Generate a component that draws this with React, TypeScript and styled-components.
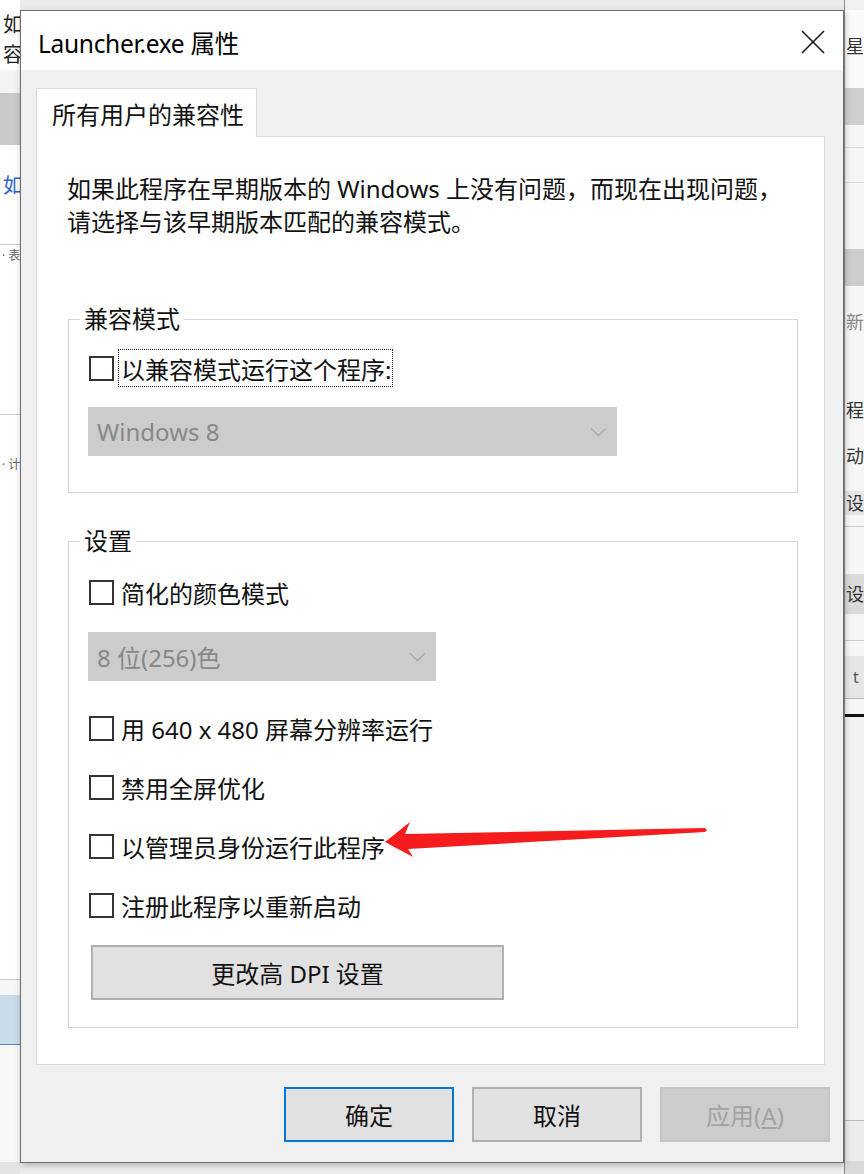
import React from "react";
import styled, { createGlobalStyle } from "styled-components";

const GlobalStyle = createGlobalStyle`
  html, body { margin: 0; padding: 0; background: #ececec; }
  body {
    font-family: "Noto Sans", "Noto Sans CJK SC", sans-serif;
    color: #111;
  }
  * { box-sizing: border-box; }
`;

/* ---------- desktop / window behind ---------- */

const Desktop = styled.main`
  position: relative;
  width: 864px;
  height: 1174px;
  overflow: hidden;
  background: #ececec;
  display: flex;
  justify-content: space-between;
`;

const SideStrip = styled.aside<{ $w: number; $edge?: string }>`
  width: ${(p) => p.$w}px;
  height: 100%;
  display: flex;
  flex-direction: column;
  ${(p) => (p.$edge ? `border-left: 1px solid ${p.$edge};` : "")}
`;

const StripRow = styled.div<{
  $h?: number;
  $bg?: string;
  $color?: string;
  $size?: number;
  $indent?: number;
  $line?: string;
  $grow?: boolean;
}>`
  flex: ${(p) => (p.$grow ? "1 1 auto" : "0 0 auto")};
  height: ${(p) => (p.$h ? `${p.$h}px` : "auto")};
  background: ${(p) => p.$bg || "#fff"};
  color: ${(p) => p.$color || "#222"};
  font-size: ${(p) => p.$size || 20}px;
  line-height: 1;
  padding-left: ${(p) => p.$indent ?? 3}px;
  display: flex;
  align-items: center;
  white-space: nowrap;
  ${(p) => (p.$line ? `border-bottom: 1px solid ${p.$line};` : "")}
`;

type Row = {
  h?: number;
  bg?: string;
  ch?: string;
  color?: string;
  size?: number;
  indent?: number;
  line?: string;
  grow?: boolean;
};

const leftRows: Row[] = [
  { h: 10, bg: "#ffffff" },
  { h: 30, bg: "#ffffff", ch: "如", size: 20 },
  { h: 30, bg: "#ffffff", ch: "容", size: 20 },
  { h: 23, bg: "#f3f3f3" },
  { h: 52, bg: "#c9c9c9" },
  { h: 26, bg: "#ffffff" },
  { h: 30, bg: "#ffffff", ch: "如", color: "#2a62c9", size: 20 },
  { h: 44, bg: "#ffffff", line: "#cfcfcf" },
  { h: 22, bg: "#ffffff", ch: "·  表", color: "#666", size: 12, indent: 2 },
  { h: 148, bg: "#ffffff", line: "#cfcfcf" },
  { h: 100, bg: "#ffffff", ch: "·  计", color: "#666", size: 12, indent: 2 },
  { h: 465, bg: "#ffffff", line: "#cfcfcf" },
  { h: 15, bg: "#f6f6f6" },
  { h: 50, bg: "#c9dcec", line: "#5b86b5" },
  { h: 117, bg: "#f7f7f7" },
  { grow: true, bg: "#e4e4e4" },
];

const rightRows: Row[] = [
  { h: 10, bg: "#f0f0f0" },
  { h: 22, bg: "#fafafa" },
  { h: 28, bg: "#fafafa", ch: "星", color: "#333", size: 18, indent: 1 },
  { h: 28, bg: "#fafafa" },
  { h: 37, bg: "#cfcfcf" },
  { h: 23, bg: "#f6f6f6", line: "#dddddd" },
  { h: 35, bg: "#f6f6f6", line: "#dddddd" },
  { h: 66, bg: "#f6f6f6" },
  { h: 37, bg: "#cdcdcd" },
  { h: 25, bg: "#f6f6f6" },
  { h: 22, bg: "#f6f6f6", ch: "新", color: "#888", size: 18, indent: 1 },
  { h: 66, bg: "#f6f6f6" },
  { h: 22, bg: "#f6f6f6", ch: "程", color: "#333", size: 18, indent: 1 },
  { h: 24, bg: "#f6f6f6" },
  { h: 22, bg: "#f6f6f6", ch: "动", color: "#333", size: 18, indent: 1 },
  { h: 24, bg: "#f6f6f6" },
  { h: 24, bg: "#e6e6e6", ch: "设", color: "#333", size: 18, indent: 1 },
  { h: 12, bg: "#f6f6f6", line: "#cccccc" },
  { h: 47, bg: "#f6f6f6" },
  { h: 40, bg: "#dadada", ch: "设", color: "#333", size: 18, indent: 1 },
  { h: 27, bg: "#f6f6f6", line: "#cccccc" },
  { h: 15, bg: "#f6f6f6" },
  { h: 43, bg: "#e6e6e6", ch: "t", color: "#555", size: 16, indent: 8, line: "#bbbbbb" },
  { h: 15, bg: "#f6f6f6" },
  { h: 3, bg: "#111111" },
  { h: 404, bg: "#f2f2f2", line: "#bbbbbb" },
  { h: 40, bg: "#ececec" },
  { grow: true, bg: "#d9d9d9" },
];

const renderRows = (rows: Row[]) =>
  rows.map((r, i) => (
    <StripRow
      key={i}
      $h={r.h}
      $bg={r.bg}
      $color={r.color}
      $size={r.size}
      $indent={r.indent}
      $line={r.line}
      $grow={r.grow}
    >
      {r.ch}
    </StripRow>
  ));

/* ---------- dialog ---------- */

const Dialog = styled.section`
  position: absolute;
  z-index: 2;
  left: 20px;
  top: 10px;
  width: 824px;
  height: 1153px;
  border: 1px solid #6e6e6e;
  background: #f0f0f0;
  box-shadow: 1px 2px 6px rgba(0, 0, 0, 0.25);
  display: flex;
  flex-direction: column;
`;

const TitleBar = styled.header`
  height: 59px;
  flex: 0 0 auto;
  background: #ffffff;
  display: flex;
  align-items: center;
  justify-content: space-between;
  padding: 3px 16px 0 17px;
`;

const Title = styled.h1`
  margin: 0;
  font-size: 24.5px;
  font-weight: 400;
  color: #000;
  letter-spacing: -0.3px;
`;

const CloseButton = styled.button`
  width: 28px;
  height: 28px;
  border: none;
  background: transparent;
  padding: 0;
  display: flex;
  align-items: center;
  justify-content: center;
`;

const Body = styled.div`
  flex: 1 1 auto;
  display: flex;
  flex-direction: column;
  padding: 18px 18px 0 15px;
`;

const TabStrip = styled.nav`
  display: flex;
`;

const Tab = styled.div`
  position: relative;
  z-index: 1;
  width: 221px;
  height: 49px;
  margin-bottom: -1px;
  padding-left: 15px;
  background: #ffffff;
  border: 1px solid #d9d9d9;
  border-bottom: none;
  display: flex;
  align-items: center;
  font-size: 24px;
  color: #111;
`;

const Panel = styled.div`
  background: #ffffff;
  border: 1px solid #d9d9d9;
  padding: 35px 26px 36px 30px;
  display: flex;
  flex-direction: column;
`;

const Intro = styled.p`
  margin: 0;
  font-size: 24px;
  line-height: 33px;
  color: #111;
`;

const Group = styled.fieldset<{ $mt: number }>`
  margin: ${(p) => p.$mt}px 0 0 1px;
  padding: 0;
  min-width: 0;
  border: 1px solid #d6d6d6;
`;

const Legend = styled.legend`
  margin-left: 11px;
  padding: 0 4px;
  height: 32px;
  font-size: 24px;
  line-height: 32px;
  color: #111;
`;

const GroupBody = styled.div<{ $pt: number; $pb: number; $gap: number }>`
  display: flex;
  flex-direction: column;
  align-items: flex-start;
  gap: ${(p) => p.$gap}px;
  padding: ${(p) => p.$pt}px 0 ${(p) => p.$pb}px 20px;
`;

const CheckRow = styled.label`
  height: 38px;
  display: flex;
  align-items: center;
`;

const Box = styled.span`
  width: 25px;
  height: 25px;
  flex: 0 0 auto;
  border: 2px solid #333333;
  background: #ffffff;
`;

const CheckText = styled.span<{ $focus?: boolean }>`
  height: 38px;
  margin-left: 4px;
  padding: 0 1px 0 2px;
  display: flex;
  align-items: center;
  font-size: 24px;
  color: #111;
  border: 1px dotted ${(p) => (p.$focus ? "#222" : "transparent")};
`;

const Select = styled.div<{ $w: number; $mb?: number }>`
  width: ${(p) => p.$w}px;
  height: 49px;
  margin: 0 0 ${(p) => p.$mb || 0}px -1px;
  padding: 0 10px 0 9px;
  background: #cccccc;
  display: flex;
  align-items: center;
  justify-content: space-between;
  font-size: 24px;
  color: #888888;
`;

const PushButton = styled.button<{ $w: number; $variant?: "default" | "disabled" }>`
  width: ${(p) => p.$w}px;
  height: 55px;
  flex: 0 0 auto;
  font-family: inherit;
  font-size: 24px;
  padding: 0;
  color: ${(p) => (p.$variant === "disabled" ? "#a3a3a3" : "#111")};
  background: ${(p) => (p.$variant === "disabled" ? "#cccccc" : "#e1e1e1")};
  border: 2px solid
    ${(p) =>
      p.$variant === "default" ? "#0078d7" : p.$variant === "disabled" ? "#c4c4c4" : "#b0b0b0"};
`;

const DpiButton = styled(PushButton)`
  margin: 0 0 0 2px;
`;

const ButtonRow = styled.footer`
  display: flex;
  justify-content: flex-end;
  gap: 18px;
  margin: 22px -5px 0 0;
`;

const ArrowMark = styled.svg`
  position: absolute;
  z-index: 3;
  left: 380px;
  top: 815px;
  width: 330px;
  height: 48px;
  pointer-events: none;
`;

const Chevron = () => (
  <svg width="17" height="10" viewBox="0 0 17 10" aria-hidden>
    <path d="M1 1.5 L8.5 8.5 L16 1.5" fill="none" stroke="#a9a9a9" strokeWidth="1.3" />
  </svg>
);

const Check = ({ label, focus }: { label: string; focus?: boolean }) => (
  <CheckRow>
    <Box />
    <CheckText $focus={focus}>{label}</CheckText>
  </CheckRow>
);

export default function App() {
  return (
    <>
      <GlobalStyle />
      <Desktop>
        <SideStrip $w={20}>{renderRows(leftRows)}</SideStrip>
        <SideStrip $w={20} $edge="#8a8a8a">
          {renderRows(rightRows)}
        </SideStrip>

        <Dialog>
          <TitleBar>
            <Title>Launcher.exe 属性</Title>
            <CloseButton aria-label="关闭">
              <svg width="26" height="26" viewBox="0 0 26 26">
                <path d="M2 2 L24 24 M24 2 L2 24" stroke="#1a1a1a" strokeWidth="1.6" />
              </svg>
            </CloseButton>
          </TitleBar>
          <Body>
            <TabStrip>
              <Tab>所有用户的兼容性</Tab>
            </TabStrip>
            <Panel>
              <Intro>
                如果此程序在早期版本的 Windows 上没有问题，而现在出现问题，
                <br />
                请选择与该早期版本匹配的兼容模式。
              </Intro>

              <Group $mt={65}>
                <Legend>兼容模式</Legend>
                <GroupBody $pt={14} $pb={36} $gap={20}>
                  <Check label="以兼容模式运行这个程序:" focus />
                  <Select $w={529}>
                    <span>Windows 8</span>
                    <Chevron />
                  </Select>
                </GroupBody>
              </Group>

              <Group $mt={32}>
                <Legend>设置</Legend>
                <GroupBody $pt={16} $pb={27} $gap={21}>
                  <Check label="简化的颜色模式" />
                  <Select $w={348} $mb={7}>
                    <span>8 位(256)色</span>
                    <Chevron />
                  </Select>
                  <Check label="用 640 x 480 屏幕分辨率运行" />
                  <Check label="禁用全屏优化" />
                  <Check label="以管理员身份运行此程序" />
                  <Check label="注册此程序以重新启动" />
                  <DpiButton $w={413}>更改高 DPI 设置</DpiButton>
                </GroupBody>
              </Group>
            </Panel>

            <ButtonRow>
              <PushButton $w={170} $variant="default">
                确定
              </PushButton>
              <PushButton $w={170}>取消</PushButton>
              <PushButton $w={170} $variant="disabled">
                应用(<u>A</u>)
              </PushButton>
            </ButtonRow>
          </Body>
        </Dialog>

        <ArrowMark viewBox="0 0 330 48" aria-hidden>
          <polygon
            points="5,27 30,7 25,19 325,13 327,15 325,17 28,34 33,42"
            fill="#f41c1c"
          />
        </ArrowMark>
      </Desktop>
    </>
  );
}
